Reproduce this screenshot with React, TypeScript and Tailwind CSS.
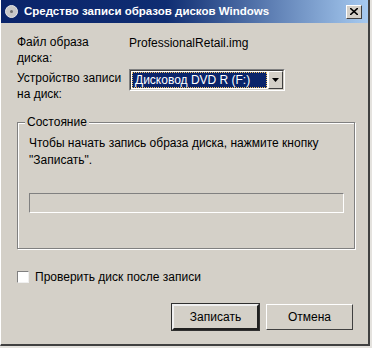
const font = "font-['Liberation_Sans',Tahoma,sans-serif]";

function CloseButton() {
  return (
    <div className="w-[16px] h-[14px] bg-[#d4d0c8] border border-t-white border-l-white border-r-[#404040] border-b-[#404040] flex items-center justify-center">
      <svg width="8" height="7" viewBox="0 0 8 7">
        <path d="M0 0 L8 7 M8 0 L0 7" stroke="#000" strokeWidth="1.6" />
      </svg>
    </div>
  );
}

function Button({ label, primary }: { label: string; primary?: boolean }) {
  return (
    <div
      className={
        "w-[87px] h-[26px] flex items-center justify-center text-[12px] text-black bg-[#d4d0c8] " +
        (primary
          ? "border-2 border-t-[#f0f0f0] border-l-[#f0f0f0] border-r-[#202020] border-b-[#202020] outline outline-1 outline-[#303030]"
          : "border border-t-white border-l-white border-r-[#404040] border-b-[#404040]")
      }
    >
      {label}
    </div>
  );
}

export default function App() {
  return (
    <div className={"w-[372px] h-[348px] bg-[#e4e2de] " + font}>
      <div className="w-[370px] h-[346px] bg-[#d4d0c8] border-l border-l-white border-r-2 border-r-[#404040] border-b-2 border-b-[#404040] flex flex-col">
        {/* title bar */}
        <div className="h-[23px] flex items-center pl-[4px] pr-[6px] bg-[linear-gradient(to_right,#0a246a_0%,#0f2d72_45%,#a6caf0_100%)]">
          <div className="w-[13px] h-[13px] rounded-full bg-[#c8c8c8] border border-[#e8e8e8] mr-[6px] flex items-center justify-center">
            <div className="w-[3px] h-[3px] rounded-full bg-[#707070]" />
          </div>
          <span className="text-white font-bold text-[11.5px] flex-1">
            Средство записи образов дисков Windows
          </span>
          <CloseButton />
        </div>

        <div className="flex flex-col pl-[16px] pr-[14px] text-[12px] text-black leading-[16px]">
          {/* file row */}
          <div className="flex mt-[11px]">
            <div className="w-[112px] whitespace-nowrap">
              Файл образа
              <br />
              диска:
            </div>
            <div className="pt-[1px]">ProfessionalRetail.img</div>
          </div>

          {/* device row */}
          <div className="flex mt-[3px]">
            <div className="w-[112px] whitespace-nowrap pt-[1px]">
              Устройство записи
              <br />
              на диск:
            </div>
            <div className="w-[156px] h-[22px] flex border border-t-[#808080] border-l-[#808080] border-r-white border-b-white">
              <div className="flex-1 flex border border-t-[#404040] border-l-[#404040] border-r-[#d4d0c8] border-b-[#d4d0c8] bg-white">
                <div className="flex-1 bg-[#0a246a] text-white text-[12px] flex items-center pl-[2px] m-[1px] border border-dotted border-[#f0c060]">
                  Дисковод DVD R (F:)
                </div>
                <div className="w-[15px] bg-[#d4d0c8] border border-t-white border-l-white border-r-[#404040] border-b-[#404040] flex items-center justify-center">
                  <svg width="7" height="4" viewBox="0 0 7 4">
                    <path d="M0 0 H7 L3.5 4 Z" fill="#000" />
                  </svg>
                </div>
              </div>
            </div>
          </div>

          {/* group box */}
          <div className="relative mt-[20px] w-[338px] h-[127px] border border-[#808080] shadow-[1px_1px_0_#fff,inset_1px_1px_0_#fff] flex flex-col">
            <span className="absolute left-[7px] top-[-9px] bg-[#d4d0c8] px-[2px]">Состояние</span>
            <div className="pl-[11px] pt-[12px] leading-[17px]">
              Чтобы начать запись образа диска, нажмите кнопку
              <br />
              "Записать".
            </div>
            <div className="ml-[11px] mt-[24px] w-[315px] h-[20px] border border-t-[#808080] border-l-[#808080] border-r-white border-b-white" />
          </div>

          {/* checkbox */}
          <div className="flex items-center mt-[20px]">
            <div className="w-[12px] h-[12px] bg-white border border-t-[#808080] border-l-[#808080] border-r-[#f0f0f0] border-b-[#f0f0f0] mr-[6px]" />
            <span>Проверить диск после записи</span>
          </div>

          {/* buttons */}
          <div className="flex justify-end gap-[7px] mt-[19px] pr-[1px]">
            <Button label="Записать" primary />
            <Button label="Отмена" />
          </div>
        </div>
      </div>
    </div>
  );
}
